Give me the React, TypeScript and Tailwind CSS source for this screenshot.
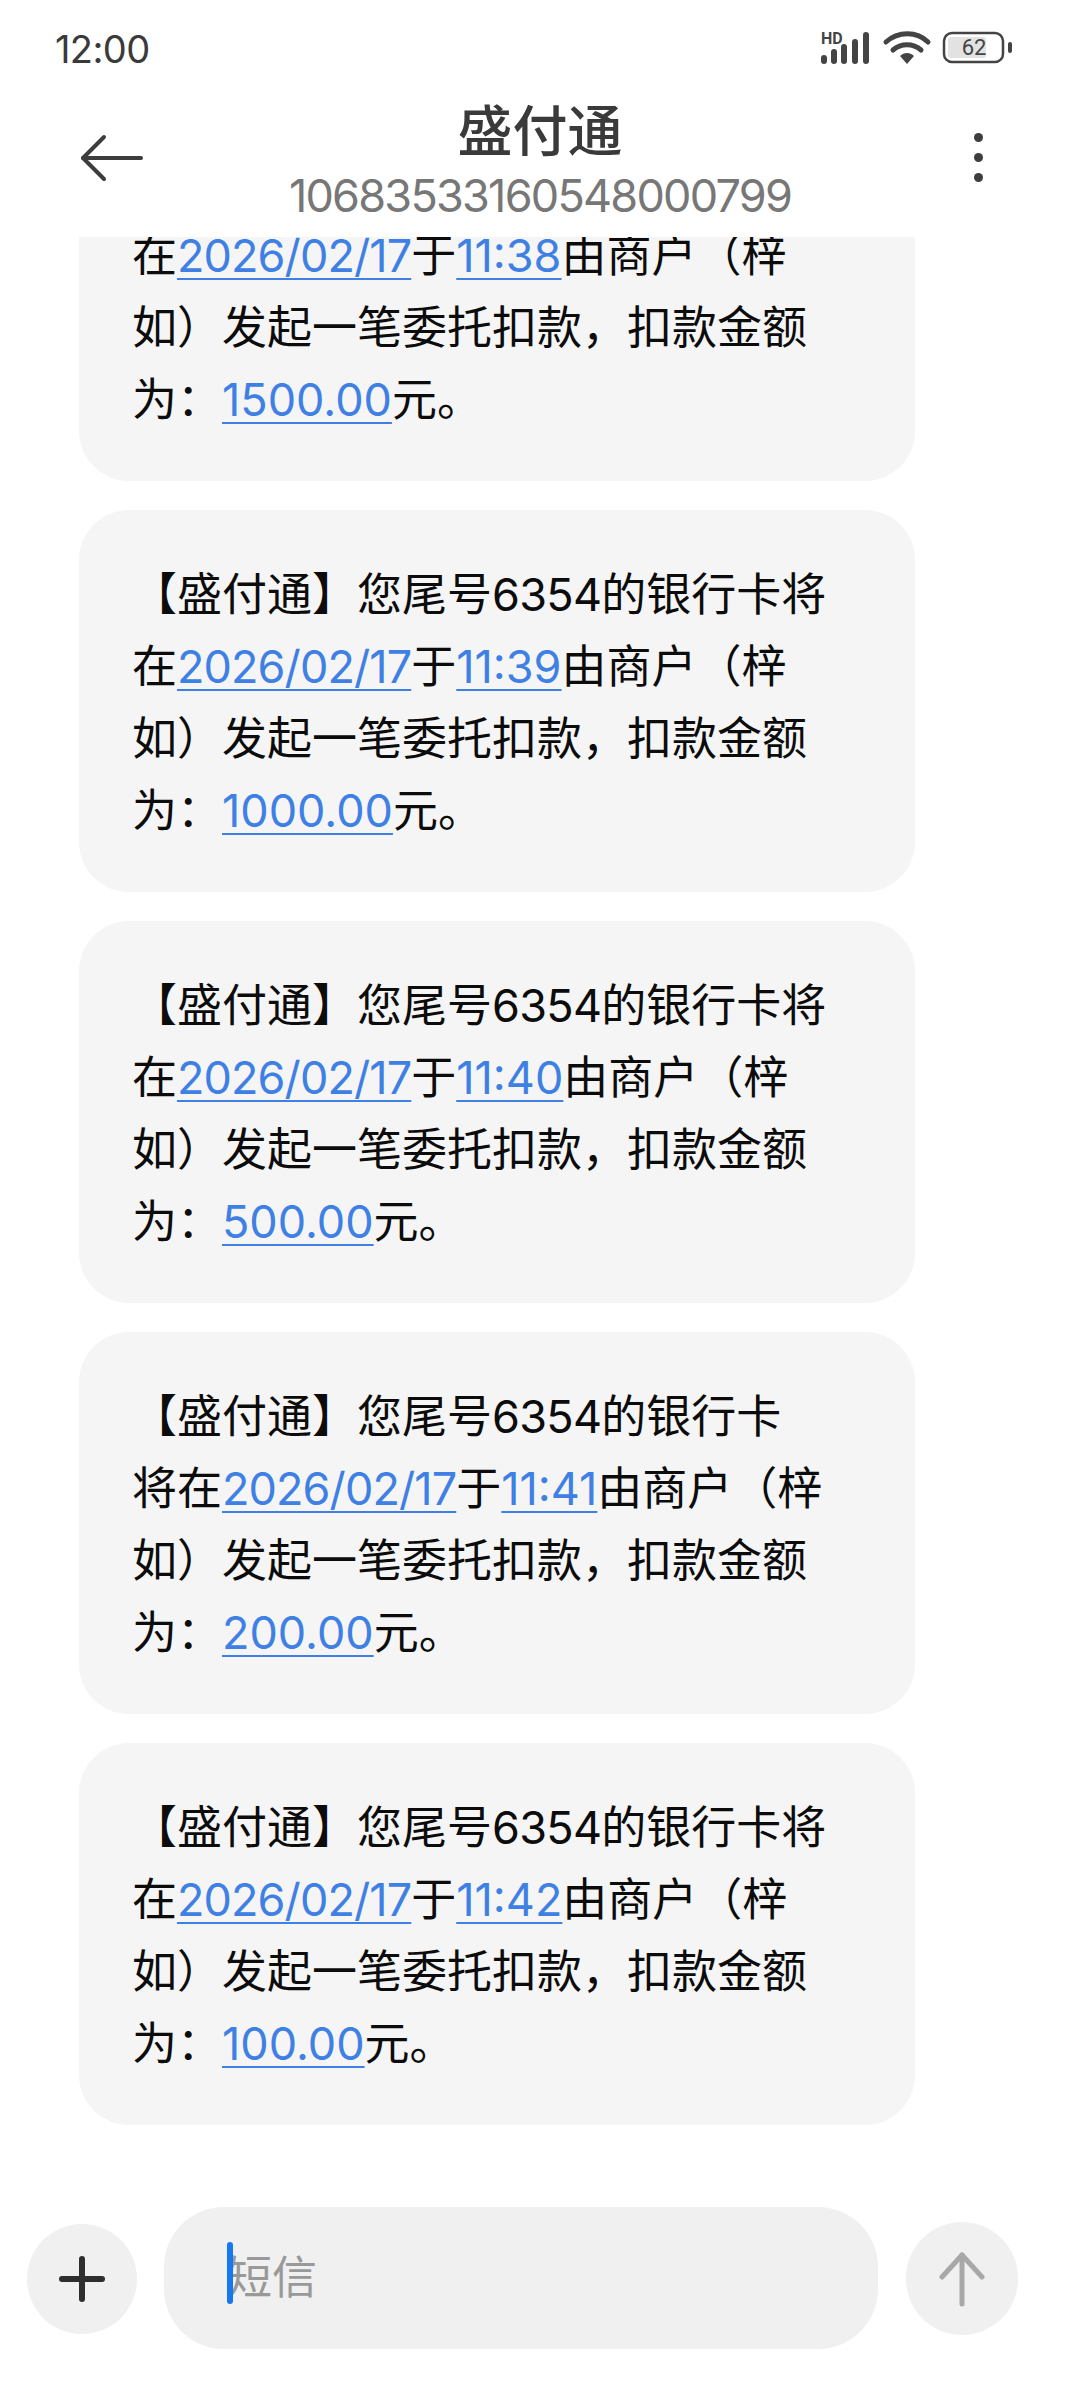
const cjk = "font-['Inter','Noto_Sans_CJK_SC',sans-serif]";

type Part = string | { link: string; date?: boolean } | { num: string };

const head: Part[] = ["【盛付通】您尾号", { num: "6354" }, "的银行卡将"];
const date = { link: "2026/02/17", date: true };

const messages: Part[][][] = [
  [
    head,
    ["在", date, "于", { link: "11:38" }, "由商户（梓"],
    ["如）发起一笔委托扣款，扣款金额"],
    ["为：", { link: "1500.00" }, "元。"],
  ],
  [
    head,
    ["在", date, "于", { link: "11:39" }, "由商户（梓"],
    ["如）发起一笔委托扣款，扣款金额"],
    ["为：", { link: "1000.00" }, "元。"],
  ],
  [
    head,
    ["在", date, "于", { link: "11:40" }, "由商户（梓"],
    ["如）发起一笔委托扣款，扣款金额"],
    ["为：", { link: "500.00" }, "元。"],
  ],
  [
    ["【盛付通】您尾号", { num: "6354" }, "的银行卡"],
    ["将在", date, "于", { link: "11:41" }, "由商户（梓"],
    ["如）发起一笔委托扣款，扣款金额"],
    ["为：", { link: "200.00" }, "元。"],
  ],
  [
    head,
    ["在", date, "于", { link: "11:42" }, "由商户（梓"],
    ["如）发起一笔委托扣款，扣款金额"],
    ["为：", { link: "100.00" }, "元。"],
  ],
];

function StatusIcons() {
  return (
    <svg width="196" height="36" viewBox="0 0 196 36" fill="none">
      <text x="0" y="13" fontSize="16" fontWeight="700" fill="#444" fontFamily="Roboto, sans-serif">HD</text>
      <g fill="#444">
        <rect x="0" y="24" width="6" height="9" rx="3" />
        <rect x="10" y="18" width="6" height="15" rx="3" />
        <rect x="20" y="13" width="6" height="20" rx="3" />
        <rect x="31" y="8" width="6" height="25" rx="3" />
        <rect x="42" y="1" width="6" height="32" rx="3" />
      </g>
      <g stroke="#444" strokeWidth="5" strokeLinecap="round">
        <path d="M65 11C77 0 96 0 107 11" />
        <path d="M72 19C80 12 92 12 100 19" />
      </g>
      <path d="M79 25C83 21 89 21 93 25L86 33Z" fill="#444" />
      <rect x="123" y="2" width="59" height="29" rx="8" stroke="#444" strokeWidth="2.5" />
      <rect x="127" y="6" width="38" height="21" rx="3" fill="#e2e2e2" />
      <text x="153" y="24" fontSize="22" textAnchor="middle" fill="#444" fontFamily="Roboto, sans-serif">62</text>
      <rect x="187" y="11" width="4" height="11" rx="2" fill="#444" />
    </svg>
  );
}

function Bubble({ lines }: { lines: Part[][] }) {
  return (
    <div className="w-[836px] rounded-[50px] bg-[#f5f5f5] pl-[53px] pt-[49px] pb-[45px] text-[45px] leading-[72px] text-[#0c0c0c]">
      {lines.map((line, i) => (
        <div key={i} className="whitespace-nowrap">
          {line.map((part, j) => {
            if (typeof part === "string") return <span key={j}>{part}</span>;
            if ("num" in part) return <span key={j} className="tracking-[-0.7px]">{part.num}</span>;
            return (
              <span
                key={j}
                className={`text-[#3f80e4] underline decoration-2 underline-offset-[6px] ${part.date ? "tracking-[-0.9px]" : ""}`}
              >
                {part.link}
              </span>
            );
          })}
        </div>
      ))}
    </div>
  );
}

export default function App() {
  return (
    <div className={`flex h-[2400px] w-[1080px] flex-col overflow-hidden bg-white ${cjk}`}>
      {/* Status bar */}
      <div className="flex h-[98px] shrink-0 items-center justify-between pl-[55px] pr-[63px]">
        <span className="text-[38px] tracking-[-0.6px] text-[#3a3a3a]">12:00</span>
        <StatusIcons />
      </div>

      {/* Header */}
      <div className="grid h-[139px] shrink-0 grid-cols-[1fr_auto_1fr] items-start px-[80px]">
        <svg className="mt-[36px]" width="64" height="48" viewBox="0 0 64 48" fill="none" stroke="#3d3d3d" strokeWidth="4" strokeLinecap="round" strokeLinejoin="round">
          <path d="M24 3L3 24L24 45" />
          <path d="M3 24H61" />
        </svg>
        <div className="flex flex-col items-center">
          <span className="text-[55px] leading-[66px] font-medium text-[#3a3a3a]">盛付通</span>
          <span className="text-[45px] leading-[64px] tracking-[-1.75px] text-[#777777]">10683533160548000799</span>
        </div>
        <div className="mt-[35px] mr-[17px] flex h-[49px] flex-col justify-between justify-self-end">
          <span className="h-[9px] w-[9px] rounded-full bg-[#3d3d3d]" />
          <span className="h-[9px] w-[9px] rounded-full bg-[#3d3d3d]" />
          <span className="h-[9px] w-[9px] rounded-full bg-[#3d3d3d]" />
        </div>
      </div>

      {/* Messages */}
      <div className="min-h-0 flex-1 overflow-hidden pl-[79px]">
        <div className="-mt-[138px] flex flex-col gap-[29px]">
          {messages.map((lines, i) => (
            <Bubble key={i} lines={lines} />
          ))}
        </div>
      </div>

      {/* Composer */}
      <div className="flex h-[195px] shrink-0 items-start pl-[27px]">
        <div className="mt-[19px] flex h-[110px] w-[110px] items-center justify-center rounded-full bg-[#f0f0f0]">
          <svg width="46" height="46" viewBox="0 0 46 46" stroke="#2e2e2e" strokeWidth="6" strokeLinecap="round">
            <path d="M23 3V43" />
            <path d="M3 23H43" />
          </svg>
        </div>
        <div className="mt-[2px] ml-[27px] flex h-[142px] w-[714px] items-center rounded-[60px] bg-[#f0f0f0] pl-[63px]">
          <span className="relative text-[45px] text-[#999999]">
            <span className="absolute top-[-2px] left-0 h-[62px] w-[6px] rounded-full bg-[#1677ee]" />
            短信
          </span>
        </div>
        <div className="mt-[17px] ml-[28px] flex h-[113px] w-[112px] items-center justify-center rounded-full bg-[#f0f0f0]">
          <svg width="46" height="56" viewBox="0 0 46 56" fill="none" stroke="#a8a8a8" strokeWidth="5" strokeLinecap="round" strokeLinejoin="round">
            <path d="M23 4V53" />
            <path d="M3 26L23 4L43 26" />
          </svg>
        </div>
      </div>
    </div>
  );
}
